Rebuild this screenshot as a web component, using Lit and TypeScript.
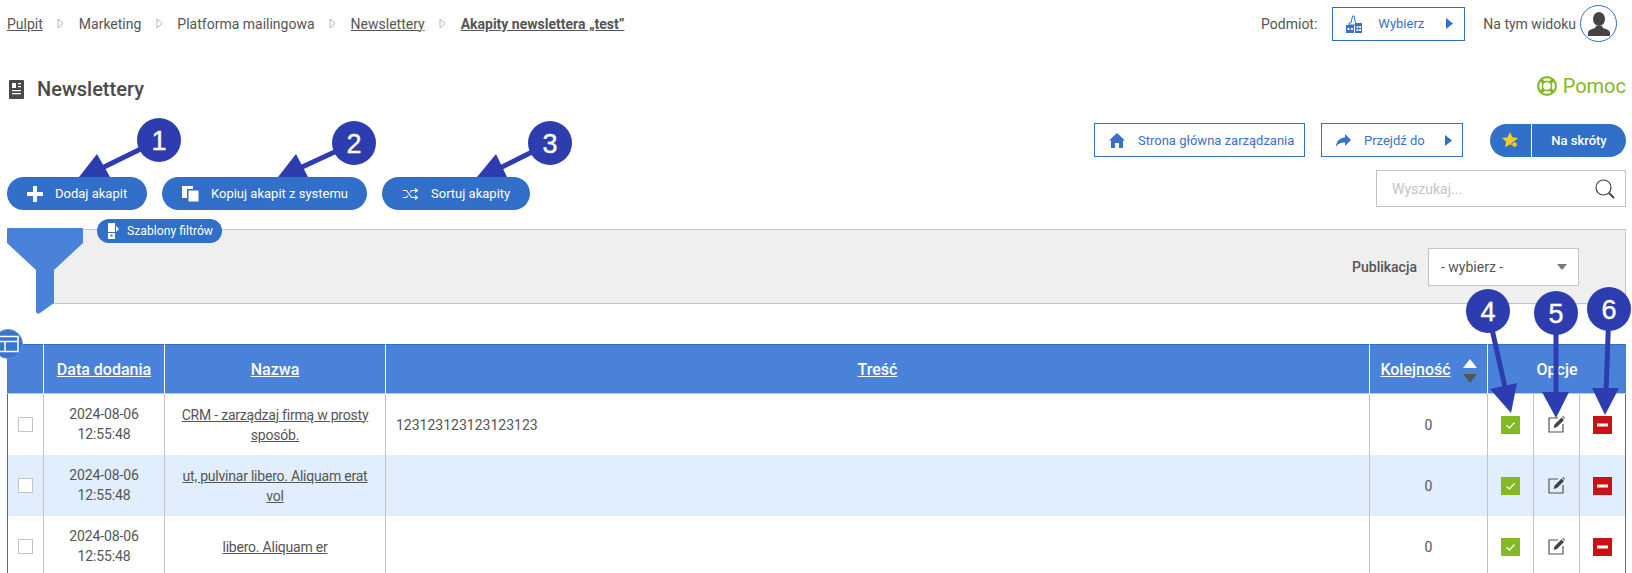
import {LitElement, html, css, svg} from 'lit';
import {customElement} from 'lit/decorators.js';

const caret = html`<svg class="caret" viewBox="0 0 7 11" width="7" height="11"><path d="M0 0l7 5.500L0 11z" fill="currentColor"/></svg>`;
const crumbSep = html`<svg class="sep" viewBox="0 0 7 11" width="7" height="11"><path d="M1 1l5 4.500L1 10z" fill="#fff" stroke="#b5b5b5"/></svg>`;

const icons = {
  doc: html`<svg viewBox="0 0 15 19" width="15" height="19"><path d="M1 0h13a1 1 0 0 1 1 1v17a1 1 0 0 1-1 1H1a1 1 0 0 1-1-1V1a1 1 0 0 1 1-1z" fill="#4a4a4a"/><path d="M3 3h4v5H3zM9 3h3v1.300H9zM9 6h3v1.300H9zM3 10h9v1.300H3zM3 13h9v1.300H3z" fill="#fff"/></svg>`,
  buoy: html`<svg viewBox="0 0 20 20" width="20" height="20"><circle cx="10" cy="10" r="10" fill="#84b926"/><circle cx="10" cy="10" r="7.800" fill="#fff"/><path d="M4 4l12 12M16 4L4 16" stroke="#84b926" stroke-width="3.600"/><circle cx="10" cy="10" r="4.600" fill="#fff" stroke="#84b926" stroke-width="1.600"/></svg>`,
  building: html`<svg viewBox="0 0 16 18" width="16" height="18"><path d="M3 8h2l1.500-7L8 1l1.500 7v2H3z" fill="none" stroke="#3a70c8"/><path d="M0 10h8v8H0zM9 8h7v10H9z" fill="#3a70c8"/><path d="M1.500 13h2v2h-2zM5 13h2v2H5zM10.500 11h1.800v2h-1.800zM13.200 11H15v2h-1.800zM10.500 14h1.800v2h-1.800zM13.200 14H15v2h-1.800z" fill="#fff"/></svg>`,
  person: html`<svg viewBox="0 0 22 24" width="22" height="24"><ellipse cx="11" cy="7" rx="6" ry="7" fill="#444"/><path d="M0 24v-3c0-3 4-4 7-5l1-2h6l1 2c3 1 7 2 7 5v3z" fill="#444"/></svg>`,
  home: html`<svg viewBox="0 0 16 15" width="16" height="15"><path d="M8 0l8 7.500h-2V15h-4v-5H6v5H2V7.500H0z" fill="#3a70c8"/></svg>`,
  share: html`<svg viewBox="0 0 15 13" width="15" height="13"><path d="M9 0l6 6-6 6V8.500C5 8.500 2 9.500 0 13c0-5 3-9 9-9.500z" fill="#3a70c8"/></svg>`,
  star: html`<svg viewBox="0 0 17 17" width="17" height="17"><path d="M8 0l2.400 5.300 5.600.6-4.200 3.800 1.200 5.600L8 12.500l-5 2.800 1.200-5.600L0 5.900l5.600-.6z" fill="#f4cb28"/><circle cx="12.500" cy="12.500" r="2.800" fill="#f4cb28" stroke="#316fc9"/></svg>`,
  plus: html`<svg viewBox="0 0 16 16" width="16" height="16"><path d="M6 0h4v6h6v4h-6v6H6v-6H0V6h6z" fill="#fff"/></svg>`,
  copy: html`<svg viewBox="0 0 17 16" width="17" height="16"><path d="M0 0h11v3H5v9H0z" fill="#fff"/><path d="M6 4h11v12H6z" fill="#fff" stroke="#316fc9"/></svg>`,
  shuffle: html`<svg viewBox="0 0 16 12" width="16" height="12" fill="none" stroke="#fff" stroke-width="1.100"><path d="M0 2.500h3.500l5 7H14M0 9.500h3.500L5 7.500M7 4.500l1.500-2H14M12 .5l2.500 2-2.500 2M12 7.500l2.500 2-2.500 2"/></svg>`,
  template: html`<svg viewBox="0 0 11 16" width="11" height="16"><path d="M0 0h7v9H0zM0 10h7v6H0z" fill="#fff"/><path d="M2.500 11.500h2v2h-2z" fill="#316fc9"/><path d="M8 3l3 3-3 3z" fill="#fff"/></svg>`,
  search: html`<svg viewBox="0 0 20 20" width="20" height="20" fill="none"><circle cx="8.500" cy="8.500" r="7.500" stroke="#444" stroke-width="1.200"/><path d="M14 14l5 5" stroke="#444" stroke-width="2"/></svg>`,
  layout: html`<svg viewBox="0 0 30 30" width="30" height="30"><circle cx="15" cy="15" r="14.500" fill="#3a75cc" stroke="#5f8fd8"/><path d="M0 7.500h25v15H0zM0 12.500h25M12 12.500v10" fill="#3a75cc" stroke="#fff" stroke-width="1.500"/></svg>`,
  funnel: html`<svg viewBox="0 0 76 87" width="76" height="87"><path d="M1 0h74a1 1 0 0 1 1 1v14L47 42v33L33 85c-2 1.500-4 .5-4-2V42L0 15V1a1 1 0 0 1 1-1z" fill="#4a82d9"/></svg>`,
  check: html`<svg viewBox="0 0 19 18" width="19" height="18"><path d="M0 0h19v18H0z" fill="#84b926"/><path d="M5.500 9.500l3 2.500 5-5.500" fill="none" stroke="#fff" stroke-width="1.300"/></svg>`,
  edit: html`<svg viewBox="0 0 17 17" width="17" height="17"><path d="M10 2H1v14h14V8" fill="none" stroke="#555" stroke-width="1.200"/><path d="M13.500 1.500l2.500 2.500-7 7-3.500 1 1-3.500zM14.300.7l.7-.7 2 2-.7.7z" fill="#444"/></svg>`,
  minus: html`<svg viewBox="0 0 19 18" width="19" height="18"><path d="M0 0h19v18H0z" fill="#cc1112"/><path d="M4 7.500h11v3H4z" fill="#fff"/></svg>`,
};

const rows = [
  {date: '2024-08-06', time: '12:55:48', name: 'CRM - zarządzaj firmą w prosty sposób.', text: '123123123123123123'},
  {date: '2024-08-06', time: '12:55:48', name: 'ut, pulvinar libero. Aliquam erat vol', text: ''},
  {date: '2024-08-06', time: '12:55:48', name: 'libero. Aliquam er', text: ''},
];

// numbered callouts painted over the screenshot: circle, shaft end, arrow head
const callouts = [
  {n: 1, cx: 159, cy: 140, sx: 102, sy: 168, head: '97,154 79,177 110,177'},
  {n: 2, cx: 354, cy: 143, sx: 300, sy: 168, head: '296,154 278,177 308,177'},
  {n: 3, cx: 550, cy: 143, sx: 500, sy: 168, head: '496,154 477,177 507,177'},
  {n: 4, cx: 1488, cy: 311, sx: 1506, sy: 392, head: '1511,413 1490,389 1517,383'},
  {n: 5, cx: 1556, cy: 313, sx: 1556, sy: 395, head: '1556,418 1542,392 1569,392'},
  {n: 6, cx: 1609, cy: 309, sx: 1606, sy: 392, head: '1605,415 1592,388 1619,388'},
];

@customElement('app-root')
export class AppRoot extends LitElement {
  static styles = css`
    :host {
      display: block;
      position: relative;
      height: 573px;
      overflow: hidden;
      background: #fff;
      font-family: Roboto, 'Liberation Sans', sans-serif;
      font-size: 14px;
      color: #555;
    }

    a {
      color: inherit;
      text-decoration: underline;
    }

    svg {
      display: block;
      flex: none;
    }

    .topbar {
      display: flex;
      align-items: center;
      justify-content: space-between;
      height: 47px;
      padding: 0 15px 0 7px;
    }

    .crumbs {
      display: flex;
      align-items: center;
    }

    .sep {
      margin: 0 14.500px;
    }

    .crumbs b {
      font-weight: 700;
    }

    .entity {
      display: flex;
      align-items: center;
    }

    .outline-btn {
      display: flex;
      align-items: center;
      box-sizing: border-box;
      height: 34px;
      border: 1px solid #316fc9;
      background: #fff;
      color: #3a70c8;
      font-size: 13px;
    }

    .caret {
      color: #316fc9;
    }

    .pick {
      width: 133px;
      margin: 0 18px 0 15px;
      padding-left: 13px;
      gap: 16px;
    }

    .pick .caret {
      margin-left: 6px;
    }

    .avatar {
      display: flex;
      align-items: center;
      justify-content: center;
      box-sizing: border-box;
      width: 37px;
      height: 37px;
      margin-left: 4px;
      border: 1px solid #316fc9;
      border-radius: 50%;
    }

    .titlebar {
      display: flex;
      align-items: center;
      justify-content: space-between;
      height: 32px;
      margin-top: 25px;
      padding: 0 6px 0 9px;
    }

    .title {
      display: flex;
      align-items: center;
      gap: 13px;
      padding-top: 2px;
      font-size: 20px;
      font-weight: 500;
      color: #4a4a4a;
    }

    .help {
      display: flex;
      align-items: center;
      gap: 6px;
      margin-top: -4px;
      font-size: 20px;
      color: #84b926;
    }

    .actions {
      display: flex;
      justify-content: space-between;
      margin-top: 19px;
      padding: 0 6px 0 7px;
    }

    .main-btns {
      display: flex;
      align-items: flex-end;
      gap: 15px;
    }

    .pill {
      display: flex;
      align-items: center;
      box-sizing: border-box;
      height: 33px;
      padding-left: 20px;
      gap: 12px;
      border-radius: 17px;
      background: #316fc9;
      color: #fff;
      font-size: 13px;
    }

    .pill.add {
      width: 140px;
    }

    .pill.copy {
      width: 205px;
    }

    .pill.sort {
      width: 148px;
      padding-left: 21px;
    }

    .side {
      display: flex;
      flex-direction: column;
      align-items: flex-end;
      gap: 13px;
      padding-bottom: 3px;
    }

    .nav {
      display: flex;
      align-items: center;
    }

    .home {
      width: 211px;
      padding-left: 14px;
      gap: 13px;
    }

    .goto {
      width: 142px;
      margin-left: 16px;
      padding-left: 14px;
      gap: 13px;
    }

    .goto .caret {
      margin-left: 7px;
    }

    .shortcuts {
      display: flex;
      width: 136px;
      height: 33px;
      margin-left: 27px;
      border-radius: 17px;
      background: #316fc9;
      color: #fff;
      font-size: 13px;
      font-weight: 500;
    }

    .shortcuts .star {
      display: flex;
      align-items: center;
      justify-content: center;
      width: 41px;
      border-right: 1px solid #fff;
    }

    .shortcuts .label {
      flex: 1;
      align-self: center;
      text-align: center;
    }

    .search {
      display: flex;
      align-items: center;
      justify-content: space-between;
      box-sizing: border-box;
      width: 250px;
      height: 37px;
      padding: 0 10px 0 15px;
      border: 1px solid #c4c4c4;
      color: #c4c4c4;
    }

    .filter {
      position: relative;
      display: flex;
      align-items: center;
      justify-content: flex-end;
      box-sizing: border-box;
      height: 75px;
      margin: 19px 6px 0 50px;
      padding-right: 46px;
      border: 1px solid #bcc6d8;
      border-left: none;
      background: #efefef;
    }

    .filter label {
      margin-right: 11px;
      font-weight: 500;
    }

    .select {
      display: flex;
      align-items: center;
      justify-content: space-between;
      box-sizing: border-box;
      width: 151px;
      height: 38px;
      padding: 0 11px 0 12px;
      border: 1px solid #c4c4c4;
      background: #fff;
    }

    .select i {
      border-left: 5px solid transparent;
      border-right: 5px solid transparent;
      border-top: 6px solid #777;
    }

    .funnel {
      position: absolute;
      left: -43px;
      top: -2px;
    }

    .templates {
      position: absolute;
      left: 47px;
      top: -11px;
      display: flex;
      align-items: center;
      gap: 8px;
      height: 24px;
      padding: 0 9px 0 11px;
      border-radius: 12px;
      background: #316fc9;
      color: #fff;
      font-size: 12.200px;
    }

    .tablewrap {
      position: relative;
      margin: 40px 6px 0 7px;
    }

    .layout {
      position: absolute;
      left: -14px;
      top: -15px;
    }

    table {
      width: 1619px;
      table-layout: fixed;
      border-collapse: separate;
      border-spacing: 0;
    }

    th {
      box-sizing: border-box;
      height: 50px;
      padding: 0;
      border-top: 1px solid #316fc9;
      border-bottom: 1px solid #c4c4c4;
      border-right: 1px solid #fff;
      background: #4a82d9;
      color: #fff;
      font-size: 16px;
      font-weight: 500;
    }

    th:last-child {
      border-right: none;
    }

    td {
      box-sizing: border-box;
      height: 61px;
      padding: 0;
      border-right: 1px solid #c4c4c4;
      line-height: 20px;
      text-align: center;
    }

    td:first-child {
      border-left: 1px solid #316fc9;
    }

    td:last-child {
      border-right: 1px solid #316fc9;
    }

    tr.alt td {
      background: #e1eefd;
    }

    td .box {
      width: 13px;
      height: 13px;
      margin: 0 auto;
      border: 1px solid #c4c4c4;
      background: #fff;
    }

    td.date {
      padding-bottom: 2px;
      letter-spacing: -0.1px;
    }

    td.name {
      padding: 0 10px;
      letter-spacing: -0.22px;
    }

    td.text {
      padding: 0 10px;
      text-align: left;
    }

    td svg {
      margin: 0 auto;
    }

    .sortable {
      display: flex;
      align-items: center;
      justify-content: center;
      gap: 12px;
    }

    .sorter {
      display: flex;
      flex-direction: column;
      gap: 6px;
      margin-top: 3px;
    }

    .sorter i {
      border-left: 7px solid transparent;
      border-right: 7px solid transparent;
    }

    .sorter .up {
      border-bottom: 9px solid #fff;
    }

    .sorter .down {
      border-top: 9px solid #555;
    }

    .callouts {
      position: absolute;
      left: 0;
      top: 0;
      pointer-events: none;
    }

    .callouts text {
      font-family: 'Liberation Sans', sans-serif;
      font-size: 27px;
      fill: #fff;
      stroke: #fff;
      stroke-width: 0.4px;
      text-anchor: middle;
    }
  `;

  render() {
    return html`
      <div class="topbar">
        <div class="crumbs">
          <a href="#">Pulpit</a>${crumbSep}
          <span>Marketing</span>${crumbSep}
          <span>Platforma mailingowa</span>${crumbSep}
          <a href="#">Newslettery</a>${crumbSep}
          <a href="#"><b>Akapity newslettera „test”</b></a>
        </div>
        <div class="entity">
          <span>Podmiot:</span>
          <div class="outline-btn pick">${icons.building}<span>Wybierz</span>${caret}</div>
          <span>Na tym widoku</span>
          <div class="avatar">${icons.person}</div>
        </div>
      </div>

      <div class="titlebar">
        <div class="title">${icons.doc}<span>Newslettery</span></div>
        <div class="help">${icons.buoy}<span>Pomoc</span></div>
      </div>

      <div class="actions">
        <div class="main-btns">
          <div class="pill add">${icons.plus}<span>Dodaj akapit</span></div>
          <div class="pill copy">${icons.copy}<span>Kopiuj akapit z systemu</span></div>
          <div class="pill sort">${icons.shuffle}<span>Sortuj akapity</span></div>
        </div>
        <div class="side">
          <div class="nav">
            <div class="outline-btn home">${icons.home}<span>Strona główna zarządzania</span></div>
            <div class="outline-btn goto">${icons.share}<span>Przejdź do</span>${caret}</div>
            <div class="shortcuts">
              <div class="star">${icons.star}</div>
              <div class="label">Na skróty</div>
            </div>
          </div>
          <div class="search"><span>Wyszukaj...</span>${icons.search}</div>
        </div>
      </div>

      <div class="filter">
        <div class="funnel">${icons.funnel}</div>
        <div class="templates">${icons.template}<span>Szablony filtrów</span></div>
        <label>Publikacja</label>
        <div class="select"><span>- wybierz -</span><i></i></div>
      </div>

      <div class="tablewrap">
        <table>
          <colgroup>
            ${[37, 121, 221, 984, 118, 46, 46, 46].map(
              (w) => html`<col width=${w} />`
            )}
          </colgroup>
          <thead>
            <tr>
              <th></th>
              <th><a href="#">Data dodania</a></th>
              <th><a href="#">Nazwa</a></th>
              <th><a href="#">Treść</a></th>
              <th>
                <div class="sortable">
                  <a href="#">Kolejność</a>
                  <div class="sorter"><i class="up"></i><i class="down"></i></div>
                </div>
              </th>
              <th colspan="3">Opcje</th>
            </tr>
          </thead>
          <tbody>
            ${rows.map(
              (r, i) => html`
                <tr class=${i % 2 ? 'alt' : ''}>
                  <td><div class="box"></div></td>
                  <td class="date">${r.date}<br />${r.time}</td>
                  <td class="name"><a href="#">${r.name}</a></td>
                  <td class="text">${r.text}</td>
                  <td>0</td>
                  <td>${icons.check}</td>
                  <td>${icons.edit}</td>
                  <td>${icons.minus}</td>
                </tr>
              `
            )}
          </tbody>
        </table>
        <div class="layout">${icons.layout}</div>
      </div>

      <svg class="callouts" width="1632" height="573">
        ${callouts.map(
          (c) => svg`
            <line x1=${c.cx} y1=${c.cy} x2=${c.sx} y2=${c.sy} stroke="#2d3db0" stroke-width="5" />
            <polygon points=${c.head} fill="#2d3db0" />
            <circle cx=${c.cx} cy=${c.cy} r="22" fill="#2d3db0" />
            <text x=${c.cx} y=${c.cy + 10}>${c.n}</text>
          `
        )}
      </svg>
    `;
  }
}
